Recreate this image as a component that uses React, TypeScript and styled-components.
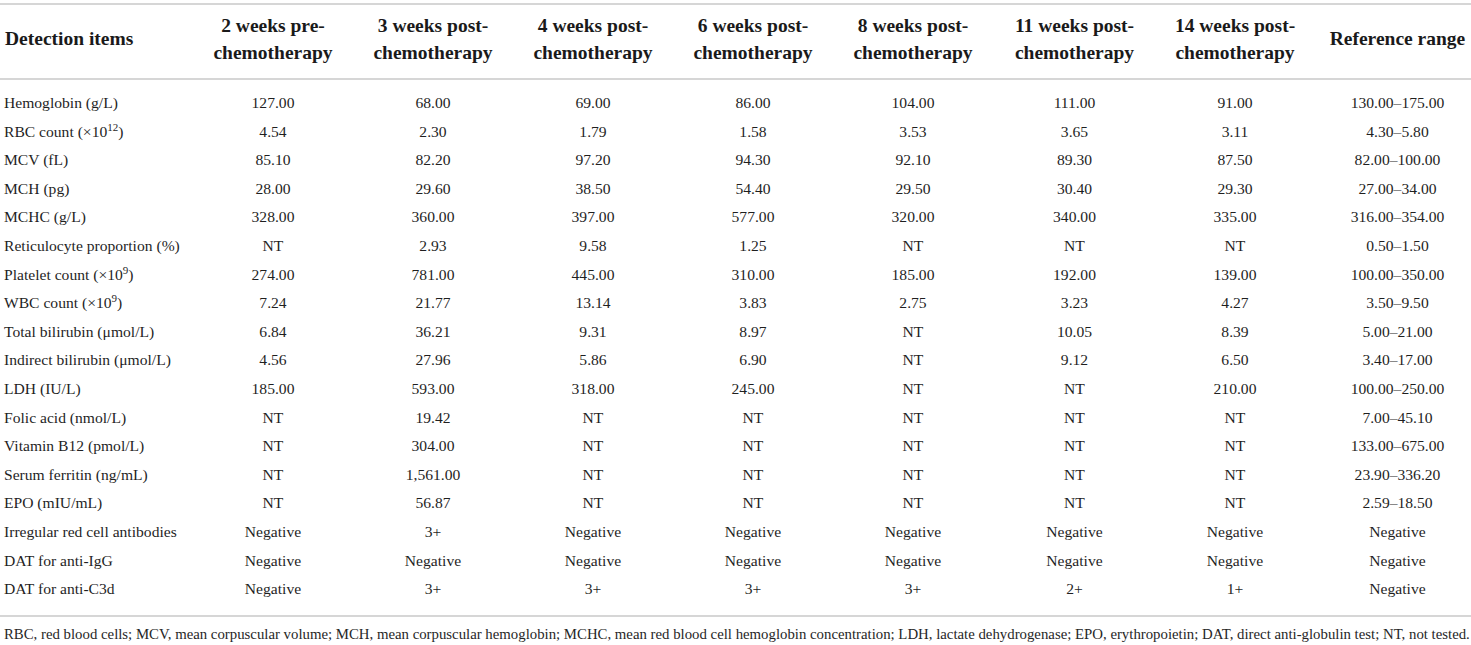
import styled, { createGlobalStyle } from "styled-components";

const GlobalStyle = createGlobalStyle`
  html, body {
    margin: 0;
    padding: 0;
    background: #ffffff;
  }
  body {
    font-family: "Liberation Serif", "DejaVu Serif", serif;
    color: #1c1c1c;
  }
`;

type Row = {
  label: React.ReactNode;
  values: string[];
};

const headers: string[][] = [
  ["Detection items"],
  ["2 weeks pre-", "chemotherapy"],
  ["3 weeks post-", "chemotherapy"],
  ["4 weeks post-", "chemotherapy"],
  ["6 weeks post-", "chemotherapy"],
  ["8 weeks post-", "chemotherapy"],
  ["11 weeks post-", "chemotherapy"],
  ["14 weeks post-", "chemotherapy"],
  ["Reference range"],
];

// column widths, tuned to the picture (sum 1471)
const colWidths = [193, 160, 160, 160, 160, 160, 163, 158, 157];

const nt = (n: number) => Array(n).fill("NT");
const neg = (n: number) => Array(n).fill("Negative");

const rows: Row[] = [
  { label: "Hemoglobin (g/L)", values: ["127.00", "68.00", "69.00", "86.00", "104.00", "111.00", "91.00", "130.00–175.00"] },
  {
    label: (
      <>
        RBC count (×10<sup>12</sup>)
      </>
    ),
    values: ["4.54", "2.30", "1.79", "1.58", "3.53", "3.65", "3.11", "4.30–5.80"],
  },
  { label: "MCV (fL)", values: ["85.10", "82.20", "97.20", "94.30", "92.10", "89.30", "87.50", "82.00–100.00"] },
  { label: "MCH (pg)", values: ["28.00", "29.60", "38.50", "54.40", "29.50", "30.40", "29.30", "27.00–34.00"] },
  { label: "MCHC (g/L)", values: ["328.00", "360.00", "397.00", "577.00", "320.00", "340.00", "335.00", "316.00–354.00"] },
  { label: "Reticulocyte proportion (%)", values: ["NT", "2.93", "9.58", "1.25", "NT", "NT", "NT", "0.50–1.50"] },
  {
    label: (
      <>
        Platelet count (×10<sup>9</sup>)
      </>
    ),
    values: ["274.00", "781.00", "445.00", "310.00", "185.00", "192.00", "139.00", "100.00–350.00"],
  },
  {
    label: (
      <>
        WBC count (×10<sup>9</sup>)
      </>
    ),
    values: ["7.24", "21.77", "13.14", "3.83", "2.75", "3.23", "4.27", "3.50–9.50"],
  },
  { label: "Total bilirubin (μmol/L)", values: ["6.84", "36.21", "9.31", "8.97", "NT", "10.05", "8.39", "5.00–21.00"] },
  { label: "Indirect bilirubin (μmol/L)", values: ["4.56", "27.96", "5.86", "6.90", "NT", "9.12", "6.50", "3.40–17.00"] },
  { label: "LDH (IU/L)", values: ["185.00", "593.00", "318.00", "245.00", "NT", "NT", "210.00", "100.00–250.00"] },
  { label: "Folic acid (nmol/L)", values: ["NT", "19.42", ...nt(5), "7.00–45.10"] },
  { label: "Vitamin B12 (pmol/L)", values: ["NT", "304.00", ...nt(5), "133.00–675.00"] },
  { label: "Serum ferritin (ng/mL)", values: ["NT", "1,561.00", ...nt(5), "23.90–336.20"] },
  { label: "EPO (mIU/mL)", values: ["NT", "56.87", ...nt(5), "2.59–18.50"] },
  { label: "Irregular red cell antibodies", values: ["Negative", "3+", ...neg(5), "Negative"] },
  { label: "DAT for anti-IgG", values: neg(8) },
  { label: "DAT for anti-C3d", values: ["Negative", "3+", "3+", "3+", "3+", "2+", "1+", "Negative"] },
];

const footnote =
  "RBC, red blood cells; MCV, mean corpuscular volume; MCH, mean corpuscular hemoglobin; MCHC, mean red blood cell hemoglobin concentration; LDH, lactate dehydrogenase; EPO, erythropoietin; DAT, direct anti-globulin test; NT, not tested.";

const App = () => {
  return (
    <>
      <GlobalStyle />
      <Wrapper>
        <Table>
          <colgroup>
            {colWidths.map((w, i) => (
              <col key={i} style={{ width: w }} />
            ))}
          </colgroup>
          <thead>
            <tr>
              {headers.map((lines, i) => (
                <HeadCell key={i} $first={i === 0}>
                  {lines.map((l, j) => (
                    <HeadLine key={j}>{l}</HeadLine>
                  ))}
                </HeadCell>
              ))}
            </tr>
          </thead>
          <tbody>
            {rows.map((row, r) => (
              <BodyRow key={r}>
                <Cell $first>{row.label}</Cell>
                {row.values.map((v, c) => (
                  <Cell key={c}>{v}</Cell>
                ))}
              </BodyRow>
            ))}
          </tbody>
        </Table>
        <Footnote>{footnote}</Footnote>
      </Wrapper>
    </>
  );
};

export default App;

const Wrapper = styled.div`
  width: 1471px;
  padding-top: 3px;
`;

const Table = styled.table`
  width: 1471px;
  table-layout: fixed;
  border-collapse: collapse;
  border-top: 2px solid #d6d6d6;
  border-bottom: 2px solid #d6d6d6;
`;

const HeadCell = styled.th<{ $first?: boolean }>`
  height: 67px;
  padding: 0 0 6px ${({ $first }) => ($first ? "5px" : "0")};
  font-size: 19.5px;
  line-height: 27px;
  font-weight: bold;
  color: #1a1a1a;
  text-align: ${({ $first }) => ($first ? "left" : "center")};
  vertical-align: middle;
  border-bottom: 2px solid #d6d6d6;

  &:last-child {
    padding-left: 10px;
  }
`;

const HeadLine = styled.div`
  white-space: nowrap;
`;

const BodyRow = styled.tr`
  height: 28.6px;

  &:first-child td {
    padding-top: 9px;
  }

  &:last-child td {
    padding-bottom: 11px;
  }
`;

const Cell = styled.td<{ $first?: boolean }>`
  padding: 0 0 0 ${({ $first }) => ($first ? "4px" : "0")};
  font-size: 15.6px;
  line-height: 28.6px;
  color: #1f1f1f;
  text-align: ${({ $first }) => ($first ? "left" : "center")};
  white-space: nowrap;

  &:last-child {
    padding-left: 10px;
  }

  sup {
    font-size: 11px;
    line-height: 0;
    vertical-align: 6px;
  }
`;

const Footnote = styled.p`
  margin: 8px 0 0 4px;
  font-size: 14.8px;
  line-height: 18px;
  color: #262626;
  white-space: nowrap;
`;
